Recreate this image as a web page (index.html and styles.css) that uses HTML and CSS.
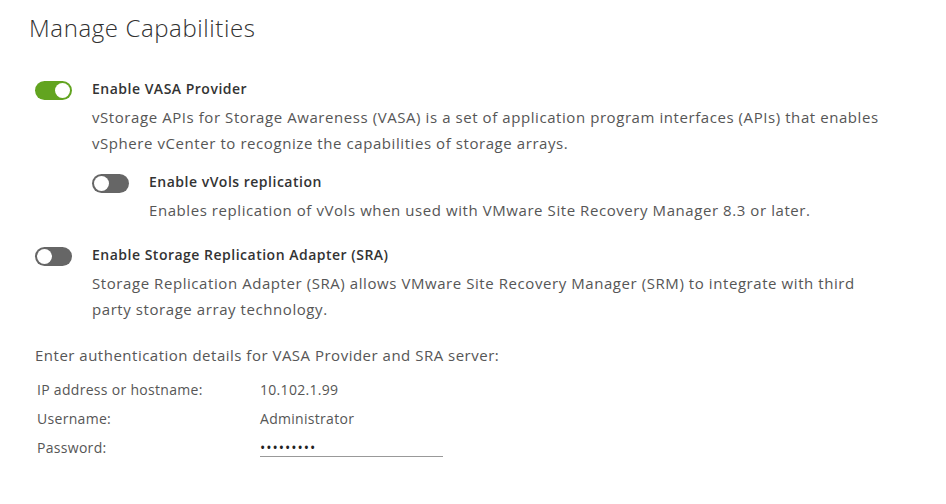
FILE: index.html
```html
<!DOCTYPE html>
<html lang="en">
<head>
    <meta charset="UTF-8">
    <title>Manage Capabilities</title>
    <link rel="stylesheet" href="styles.css">
</head>
<body>
<div class="page">
    <h1 class="title">Manage Capabilities</h1>

    <div class="option">
        <span class="toggle on"></span>
        <div class="option-body">
            <div class="option-label">Enable VASA Provider</div>
            <p class="option-desc">vStorage APIs for Storage Awareness (VASA) is a set of application program interfaces (APIs) that enables<br>vSphere vCenter to recognize the capabilities of storage arrays.</p>

            <div class="option sub">
                <span class="toggle"></span>
                <div class="option-body">
                    <div class="option-label">Enable vVols replication</div>
                    <p class="option-desc">Enables replication of vVols when used with VMware Site Recovery Manager 8.3 or later.</p>
                </div>
            </div>
        </div>
    </div>

    <div class="option">
        <span class="toggle"></span>
        <div class="option-body">
            <div class="option-label">Enable Storage Replication Adapter (SRA)</div>
            <p class="option-desc">Storage Replication Adapter (SRA) allows VMware Site Recovery Manager (SRM) to integrate with third<br>party storage array technology.</p>
        </div>
    </div>

    <p class="auth-intro">Enter authentication details for VASA Provider and SRA server:</p>
    <div class="auth-grid">
        <span class="auth-key">IP address or hostname:</span>
        <span class="auth-val">10.102.1.99</span>
        <span class="auth-key">Username:</span>
        <span class="auth-val">Administrator</span>
        <span class="auth-key">Password:</span>
        <span class="auth-val password">&bull;&bull;&bull;&bull;&bull;&bull;&bull;&bull;&bull;</span>
    </div>
</div>
</body>
</html>
```

FILE: styles.css
```css
body {
    margin: 0;
    background: #fff;
    font-family: "Open Sans", Lato, sans-serif;
    color: #565656;
}

.page {
    padding: 12px 0 0 29px;
}

.title {
    margin: 0 0 35px;
    font-size: 24px;
    font-weight: 300;
    letter-spacing: 0.6px;
    color: #313131;
    line-height: 32px;
}

.option {
    display: flex;
    gap: 20px;
    margin-left: 6px;
    margin-bottom: 22px;
}

.option.sub {
    margin: 16px 0 0;
}

.toggle {
    flex: none;
    position: relative;
    width: 37px;
    height: 19px;
    margin-top: 2px;
    border-radius: 10px;
    background: #666;
}

.toggle::after {
    content: "";
    position: absolute;
    top: 2px;
    left: 2px;
    width: 15px;
    height: 15px;
    border-radius: 50%;
    background: #fff;
}

.toggle.on {
    background: #62a420;
}

.toggle.on::after {
    left: 20px;
}

.option-label {
    font-size: 14px;
    font-weight: 600;
    letter-spacing: 0.5px;
    color: #333;
    line-height: 20px;
}

.option-desc {
    margin: 5px 0 0;
    font-size: 15px;
    letter-spacing: 0.57px;
    line-height: 26px;
}

.auth-intro {
    margin: 0 0 13px 6px;
    font-size: 15px;
    letter-spacing: 0.5px;
    line-height: 22px;
}

.auth-grid {
    display: grid;
    grid-template-columns: 223px 183px;
    row-gap: 7px;
    margin-left: 8px;
    font-size: 14px;
    letter-spacing: 0.3px;
    line-height: 22px;
}

.password {
    align-self: center;
    line-height: 17px;
    border-bottom: 1px solid #999;
    color: #222;
    letter-spacing: 1px;
}
```
